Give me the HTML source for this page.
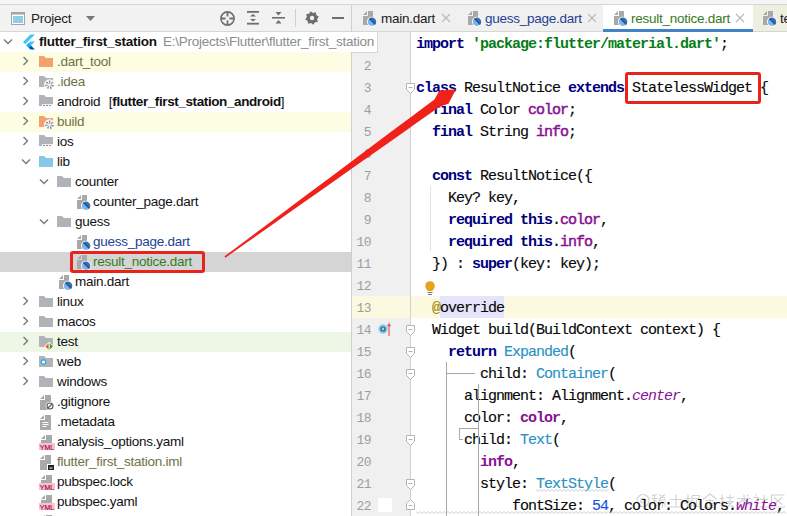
<!DOCTYPE html><html><head><meta charset="utf-8"><style>
html,body{margin:0;padding:0;}
body{width:787px;height:516px;position:relative;overflow:hidden;background:#fff;font-family:"Liberation Sans", sans-serif;}
.a{position:absolute;}
.t{position:absolute;white-space:pre;font-size:13.5px;letter-spacing:-0.25px;line-height:20px;height:20px;}
.c{position:absolute;white-space:pre;font-family:"Liberation Mono", monospace;font-size:15px;letter-spacing:-1px;line-height:22px;color:#080808;left:416px;-webkit-text-stroke:0.15px currentColor;}
.k{font-weight:bold;color:#000080;-webkit-text-stroke:0;}
.s{color:#067d17;font-weight:bold;-webkit-text-stroke:0;}
.p{color:#871094;-webkit-text-stroke:0.5px currentColor;}
.pb{color:#871094;font-weight:bold;-webkit-text-stroke:0;}
.pi{color:#871094;font-style:italic;-webkit-text-stroke:0;}
.cl{color:#2b91c7;}
.n{color:#1750eb;}
.ln{position:absolute;left:352px;width:19px;text-align:right;font-family:"Liberation Mono", monospace;font-size:13px;letter-spacing:-0.6px;line-height:22px;color:#9e9e9e;}

</style></head><body>
<div class="a" style="left:0;top:0;width:787px;height:4px;background:#f5f5f5"></div>
<div class="a" style="left:0;top:4px;width:787px;height:1px;background:#d6d6d6"></div>
<div class="a" style="left:0;top:5px;width:351px;height:26px;background:#f2f2f2"></div>
<div class="a" style="left:352px;top:5px;width:435px;height:26px;background:#f0f0f0"></div>
<div class="a" style="left:0;top:31px;width:787px;height:1px;background:#d6d6d6"></div>
<div class="a" style="left:351px;top:5px;width:1px;height:511px;background:#d0d0d0"></div>
<svg style="position:absolute;left:11px;top:12px" width="14" height="13" viewBox="0 0 14 13" ><rect x="0.5" y="0.5" width="13" height="12" fill="#fff" stroke="#a4a4a4"/><rect x="0" y="0" width="14" height="2.5" fill="#a4a4a4"/><rect x="2" y="4" width="10" height="7" fill="#8ccfe6"/></svg>
<div class="t" style="left:31px;top:9px;color:#222">Project</div>
<svg style="position:absolute;left:86px;top:16px" width="9" height="5" viewBox="0 0 9 5" ><path d="M0 0 H9 L4.5 5 Z" fill="#767676"/></svg>
<svg style="position:absolute;left:219px;top:10px" width="17" height="17" viewBox="0 0 17 17" ><circle cx="8.5" cy="8.5" r="6.6" fill="none" stroke="#6e6e6e" stroke-width="1.6"/><path d="M8.5 2 V6.6 M8.5 10.4 V15 M2 8.5 H6.6 M10.4 8.5 H15" stroke="#6e6e6e" stroke-width="1.8"/></svg>
<svg style="position:absolute;left:246px;top:10px" width="14" height="16" viewBox="0 0 14 16" ><rect x="1" y="1" width="12" height="1.8" fill="#6e6e6e"/><rect x="1" y="12.8" width="12" height="1.8" fill="#6e6e6e"/><path d="M4 6.6 L7 4 L10 6.6 Z M4 9 L7 11.6 L10 9 Z" fill="#6e6e6e"/></svg>
<svg style="position:absolute;left:272px;top:10px" width="14" height="16" viewBox="0 0 14 16" ><rect x="0" y="7" width="13" height="1.6" fill="#6e6e6e"/><path d="M3.5 2 L6.5 5.5 L9.5 2 Z M3.5 13.5 L6.5 10 L9.5 13.5 Z" fill="#6e6e6e"/></svg>
<div class="a" style="left:295px;top:9px;width:1px;height:18px;background:#d0d0d0"></div>
<svg style="position:absolute;left:304px;top:10px" width="16" height="16" viewBox="0 0 16 16" ><polygon points="14.87,6.63 13.10,9.01 13.82,11.89 10.89,12.32 9.37,14.87 6.99,13.10 4.11,13.82 3.68,10.89 1.13,9.37 2.90,6.99 2.18,4.11 5.11,3.68 6.63,1.13 9.01,2.90 11.89,2.18 12.32,5.11" fill="#6e6e6e"/><circle cx="8" cy="8" r="2.2" fill="#f2f2f2"/></svg>
<div class="a" style="left:332px;top:17px;width:12px;height:2px;background:#6e6e6e"></div>
<div class="a" style="left:603px;top:5px;width:150px;height:26px;background:#ffffff"></div>
<div class="a" style="left:603px;top:29px;width:150px;height:3px;background:#4083c9"></div>
<div class="a" style="left:753px;top:5px;width:34px;height:26px;background:#efefdf"></div>
<svg style="position:absolute;left:363px;top:11px" width="14" height="16" viewBox="0 0 14 16" ><path d="M0 4 L4 0 L4 4 Z" fill="#a9a9a9"/><rect x="5" y="0" width="5" height="14" fill="#a9a9a9"/><rect x="0" y="5" width="10" height="9" fill="#a9a9a9"/><circle cx="9" cy="10.8" r="5" fill="#fff"/><circle cx="9" cy="10.8" r="4.1" fill="#78b4ee"/><path d="M6.1 7.9 A4.1 4.1 0 0 1 11.9 13.7 Z" fill="#3b6eae"/><path d="M6.1 7.9 L11.9 13.7 L12.6 12.9 L6.9 7.2 Z" fill="#1d4a85"/></svg>
<div class="t" style="left:381px;top:9px;color:#1a1a1a">main.dart</div>
<svg style="position:absolute;left:441px;top:13px" width="10" height="10" viewBox="0 0 10 10" ><path d="M1 1 L9 9 M9 1 L1 9" stroke="#b8b8b8" stroke-width="1.1"/></svg>
<svg style="position:absolute;left:468px;top:11px" width="14" height="16" viewBox="0 0 14 16" ><path d="M0 4 L4 0 L4 4 Z" fill="#a9a9a9"/><rect x="5" y="0" width="5" height="14" fill="#a9a9a9"/><rect x="0" y="5" width="10" height="9" fill="#a9a9a9"/><circle cx="9" cy="10.8" r="5" fill="#fff"/><circle cx="9" cy="10.8" r="4.1" fill="#78b4ee"/><path d="M6.1 7.9 A4.1 4.1 0 0 1 11.9 13.7 Z" fill="#3b6eae"/><path d="M6.1 7.9 L11.9 13.7 L12.6 12.9 L6.9 7.2 Z" fill="#1d4a85"/></svg>
<div class="t" style="left:485px;top:9px;color:#243f94">guess_page.dart</div>
<svg style="position:absolute;left:587px;top:13px" width="10" height="10" viewBox="0 0 10 10" ><path d="M1 1 L9 9 M9 1 L1 9" stroke="#b8b8b8" stroke-width="1.1"/></svg>
<svg style="position:absolute;left:614px;top:11px" width="14" height="16" viewBox="0 0 14 16" ><path d="M0 4 L4 0 L4 4 Z" fill="#a9a9a9"/><rect x="5" y="0" width="5" height="14" fill="#a9a9a9"/><rect x="0" y="5" width="10" height="9" fill="#a9a9a9"/><circle cx="9" cy="10.8" r="5" fill="#fff"/><circle cx="9" cy="10.8" r="4.1" fill="#78b4ee"/><path d="M6.1 7.9 A4.1 4.1 0 0 1 11.9 13.7 Z" fill="#3b6eae"/><path d="M6.1 7.9 L11.9 13.7 L12.6 12.9 L6.9 7.2 Z" fill="#1d4a85"/></svg>
<div class="t" style="left:631px;top:9px;color:#367a22">result_notice.dart</div>
<svg style="position:absolute;left:735px;top:13px" width="10" height="10" viewBox="0 0 10 10" ><path d="M1 1 L9 9 M9 1 L1 9" stroke="#b8b8b8" stroke-width="1.1"/></svg>
<svg style="position:absolute;left:763px;top:11px" width="14" height="16" viewBox="0 0 14 16" ><path d="M0 4 L4 0 L4 4 Z" fill="#a9a9a9"/><rect x="5" y="0" width="5" height="14" fill="#a9a9a9"/><rect x="0" y="5" width="10" height="9" fill="#a9a9a9"/><circle cx="9" cy="10.8" r="5" fill="#fff"/><circle cx="9" cy="10.8" r="4.1" fill="#78b4ee"/><path d="M6.1 7.9 A4.1 4.1 0 0 1 11.9 13.7 Z" fill="#3b6eae"/><path d="M6.1 7.9 L11.9 13.7 L12.6 12.9 L6.9 7.2 Z" fill="#1d4a85"/></svg>
<div class="t" style="left:780px;top:9px;color:#1a1a1a">test</div>
<svg style="position:absolute;left:2.5px;top:38px" width="10" height="7" viewBox="0 0 10 7" ><path d="M1 1.5 L5 5.5 L9 1.5" fill="none" stroke="#7a7a7a" stroke-width="1.4"/></svg>
<svg style="position:absolute;left:22.5px;top:34px" width="12" height="16" viewBox="0 0 256 317"><path d="M157.7 0 L0 157.7 L48.8 206.5 L255.3 0 Z" fill="#47c5fb"/><path d="M156.6 145.4 L72.1 229.8 L121.1 279.5 L169.8 230.8 L255.3 145.4 Z" fill="#47c5fb"/><path d="M121.1 279.5 L158.2 316.6 H255.3 L169.8 230.8 Z" fill="#00569e"/><path d="M71.6 230.4 L120.4 181.6 L169.8 230.8 L121.1 279.5 Z" fill="#00b5f8"/></svg>
<div class="t" style="left:39px;top:32px;color:#111"><b>flutter_first_station</b></div>
<div class="a" style="left:0;top:52px;width:351px;height:20px;background:#fdfde4"></div>
<svg style="position:absolute;left:22px;top:56px" width="7" height="10" viewBox="0 0 7 10" ><path d="M1.5 1 L5.5 5 L1.5 9" fill="none" stroke="#7a7a7a" stroke-width="1.4"/></svg>
<svg style="position:absolute;left:39px;top:56px" width="14" height="11" viewBox="0 0 14 11" ><path d="M0 0 H5 L7 2 H14 V11 H0 Z" fill="#f4a26d"/></svg>
<div class="t" style="left:57px;top:52px;color:#707043">.dart_tool</div>
<svg style="position:absolute;left:22px;top:76px" width="7" height="10" viewBox="0 0 7 10" ><path d="M1.5 1 L5.5 5 L1.5 9" fill="none" stroke="#7a7a7a" stroke-width="1.4"/></svg>
<svg style="position:absolute;left:39px;top:76px" width="16" height="15" viewBox="0 0 16 15" ><path d="M0 0 H5 L7 2 H14 V11 H0 Z" fill="#b0b4b9"/><circle cx="10.5" cy="8.8" r="5.5" fill="#fff"/><path d="M11.10 8.80 L14.89 9.02 L14.36 10.91 Q12.55 10.05 11.10 8.80 Z" fill="#8a8f94"/><path d="M10.87 9.27 L13.07 12.37 L11.26 13.13 Q10.79 11.18 10.87 9.27 Z" fill="#8a8f94"/><path d="M10.37 9.38 L9.31 13.04 L7.58 12.10 Q8.82 10.52 10.37 9.38 Z" fill="#8a8f94"/><path d="M9.96 9.06 L6.45 10.51 L6.11 8.57 Q8.11 8.56 9.96 9.06 Z" fill="#8a8f94"/><path d="M9.96 8.54 L6.64 6.70 L7.94 5.22 Q9.20 6.78 9.96 8.54 Z" fill="#8a8f94"/><path d="M10.37 8.22 L9.74 4.47 L11.70 4.57 Q11.27 6.53 10.37 8.22 Z" fill="#8a8f94"/><path d="M10.87 8.33 L13.41 5.50 L14.56 7.10 Q12.76 7.98 10.87 8.33 Z" fill="#8a8f94"/></svg>
<div class="t" style="left:57px;top:72px;color:#707043">.idea</div>
<svg style="position:absolute;left:22px;top:96px" width="7" height="10" viewBox="0 0 7 10" ><path d="M1.5 1 L5.5 5 L1.5 9" fill="none" stroke="#7a7a7a" stroke-width="1.4"/></svg>
<svg style="position:absolute;left:39px;top:95px" width="14" height="11" viewBox="0 0 14 11" ><path d="M0 0 H5 L7 2 H14 V11 H0 Z" fill="#b0b4b9"/><rect x="3" y="9.2" width="11" height="3" fill="#fff"/><rect x="4" y="10" width="2" height="1.6" fill="#40a8d8"/><rect x="7" y="10" width="2" height="1.6" fill="#e06050"/><rect x="10" y="10" width="2" height="1.6" fill="#999"/></svg>
<div class="t" style="left:57px;top:92px;color:#111">android<span style="display:inline-block;width:8.5px"></span>[<b style="letter-spacing:-0.4px">flutter_first_station_android</b>]</div>
<div class="a" style="left:0;top:112px;width:351px;height:20px;background:#fdfde4"></div>
<svg style="position:absolute;left:22px;top:116px" width="7" height="10" viewBox="0 0 7 10" ><path d="M1.5 1 L5.5 5 L1.5 9" fill="none" stroke="#7a7a7a" stroke-width="1.4"/></svg>
<svg style="position:absolute;left:39px;top:116px" width="16" height="15" viewBox="0 0 16 15" ><path d="M0 0 H5 L7 2 H14 V11 H0 Z" fill="#f4a26d"/><circle cx="10.5" cy="8.8" r="5.5" fill="#fff"/><path d="M11.10 8.80 L14.89 9.02 L14.36 10.91 Q12.55 10.05 11.10 8.80 Z" fill="#8a8f94"/><path d="M10.87 9.27 L13.07 12.37 L11.26 13.13 Q10.79 11.18 10.87 9.27 Z" fill="#8a8f94"/><path d="M10.37 9.38 L9.31 13.04 L7.58 12.10 Q8.82 10.52 10.37 9.38 Z" fill="#8a8f94"/><path d="M9.96 9.06 L6.45 10.51 L6.11 8.57 Q8.11 8.56 9.96 9.06 Z" fill="#8a8f94"/><path d="M9.96 8.54 L6.64 6.70 L7.94 5.22 Q9.20 6.78 9.96 8.54 Z" fill="#8a8f94"/><path d="M10.37 8.22 L9.74 4.47 L11.70 4.57 Q11.27 6.53 10.37 8.22 Z" fill="#8a8f94"/><path d="M10.87 8.33 L13.41 5.50 L14.56 7.10 Q12.76 7.98 10.87 8.33 Z" fill="#8a8f94"/></svg>
<div class="t" style="left:57px;top:112px;color:#707043">build</div>
<svg style="position:absolute;left:22px;top:136px" width="7" height="10" viewBox="0 0 7 10" ><path d="M1.5 1 L5.5 5 L1.5 9" fill="none" stroke="#7a7a7a" stroke-width="1.4"/></svg>
<svg style="position:absolute;left:39px;top:135px" width="14" height="11" viewBox="0 0 14 11" ><path d="M0 0 H5 L7 2 H14 V11 H0 Z" fill="#b0b4b9"/><rect x="3" y="9.2" width="11" height="3" fill="#fff"/><rect x="4" y="10" width="2" height="1.6" fill="#40a8d8"/><rect x="7" y="10" width="2" height="1.6" fill="#e06050"/><rect x="10" y="10" width="2" height="1.6" fill="#999"/></svg>
<div class="t" style="left:57px;top:132px;color:#111">ios</div>
<svg style="position:absolute;left:20.5px;top:158px" width="10" height="7" viewBox="0 0 10 7" ><path d="M1 1.5 L5 5.5 L9 1.5" fill="none" stroke="#7a7a7a" stroke-width="1.4"/></svg>
<svg style="position:absolute;left:39px;top:156px" width="14" height="11" viewBox="0 0 14 11" ><path d="M0 0 H5 L7 2 H14 V11 H0 Z" fill="#87c8ea"/></svg>
<div class="t" style="left:57px;top:152px;color:#111">lib</div>
<svg style="position:absolute;left:38.5px;top:178px" width="10" height="7" viewBox="0 0 10 7" ><path d="M1 1.5 L5 5.5 L9 1.5" fill="none" stroke="#7a7a7a" stroke-width="1.4"/></svg>
<svg style="position:absolute;left:57px;top:176px" width="14" height="11" viewBox="0 0 14 11" ><path d="M0 0 H5 L7 2 H14 V11 H0 Z" fill="#b0b4b9"/></svg>
<div class="t" style="left:75px;top:172px;color:#111">counter</div>
<svg style="position:absolute;left:77px;top:195px" width="14" height="16" viewBox="0 0 14 16" ><path d="M0 4 L4 0 L4 4 Z" fill="#a9a9a9"/><rect x="5" y="0" width="5" height="14" fill="#a9a9a9"/><rect x="0" y="5" width="10" height="9" fill="#a9a9a9"/><circle cx="9" cy="10.8" r="5" fill="#fff"/><circle cx="9" cy="10.8" r="4.1" fill="#78b4ee"/><path d="M6.1 7.9 A4.1 4.1 0 0 1 11.9 13.7 Z" fill="#3b6eae"/><path d="M6.1 7.9 L11.9 13.7 L12.6 12.9 L6.9 7.2 Z" fill="#1d4a85"/></svg>
<div class="t" style="left:93px;top:192px;color:#111">counter_page.dart</div>
<svg style="position:absolute;left:38.5px;top:218px" width="10" height="7" viewBox="0 0 10 7" ><path d="M1 1.5 L5 5.5 L9 1.5" fill="none" stroke="#7a7a7a" stroke-width="1.4"/></svg>
<svg style="position:absolute;left:57px;top:216px" width="14" height="11" viewBox="0 0 14 11" ><path d="M0 0 H5 L7 2 H14 V11 H0 Z" fill="#b0b4b9"/></svg>
<div class="t" style="left:75px;top:212px;color:#111">guess</div>
<svg style="position:absolute;left:77px;top:235px" width="14" height="16" viewBox="0 0 14 16" ><path d="M0 4 L4 0 L4 4 Z" fill="#a9a9a9"/><rect x="5" y="0" width="5" height="14" fill="#a9a9a9"/><rect x="0" y="5" width="10" height="9" fill="#a9a9a9"/><circle cx="9" cy="10.8" r="5" fill="#fff"/><circle cx="9" cy="10.8" r="4.1" fill="#78b4ee"/><path d="M6.1 7.9 A4.1 4.1 0 0 1 11.9 13.7 Z" fill="#3b6eae"/><path d="M6.1 7.9 L11.9 13.7 L12.6 12.9 L6.9 7.2 Z" fill="#1d4a85"/></svg>
<div class="t" style="left:93px;top:232px;color:#243f94">guess_page.dart</div>
<div class="a" style="left:0;top:252px;width:351px;height:20px;background:#d5d5d5"></div>
<svg style="position:absolute;left:77px;top:255px" width="14" height="16" viewBox="0 0 14 16" ><path d="M0 4 L4 0 L4 4 Z" fill="#a9a9a9"/><rect x="5" y="0" width="5" height="14" fill="#a9a9a9"/><rect x="0" y="5" width="10" height="9" fill="#a9a9a9"/><circle cx="9" cy="10.8" r="5" fill="#fff"/><circle cx="9" cy="10.8" r="4.1" fill="#78b4ee"/><path d="M6.1 7.9 A4.1 4.1 0 0 1 11.9 13.7 Z" fill="#3b6eae"/><path d="M6.1 7.9 L11.9 13.7 L12.6 12.9 L6.9 7.2 Z" fill="#1d4a85"/></svg>
<div class="t" style="left:93px;top:252px;color:#367a22">result_notice.dart</div>
<svg style="position:absolute;left:59px;top:275px" width="14" height="16" viewBox="0 0 14 16" ><path d="M0 4 L4 0 L4 4 Z" fill="#a9a9a9"/><rect x="5" y="0" width="5" height="14" fill="#a9a9a9"/><rect x="0" y="5" width="10" height="9" fill="#a9a9a9"/><circle cx="9" cy="10.8" r="5" fill="#fff"/><circle cx="9" cy="10.8" r="4.1" fill="#78b4ee"/><path d="M6.1 7.9 A4.1 4.1 0 0 1 11.9 13.7 Z" fill="#3b6eae"/><path d="M6.1 7.9 L11.9 13.7 L12.6 12.9 L6.9 7.2 Z" fill="#1d4a85"/></svg>
<div class="t" style="left:75px;top:272px;color:#111">main.dart</div>
<svg style="position:absolute;left:22px;top:296px" width="7" height="10" viewBox="0 0 7 10" ><path d="M1.5 1 L5.5 5 L1.5 9" fill="none" stroke="#7a7a7a" stroke-width="1.4"/></svg>
<svg style="position:absolute;left:39px;top:296px" width="14" height="11" viewBox="0 0 14 11" ><path d="M0 0 H5 L7 2 H14 V11 H0 Z" fill="#b0b4b9"/></svg>
<div class="t" style="left:57px;top:292px;color:#111">linux</div>
<svg style="position:absolute;left:22px;top:316px" width="7" height="10" viewBox="0 0 7 10" ><path d="M1.5 1 L5.5 5 L1.5 9" fill="none" stroke="#7a7a7a" stroke-width="1.4"/></svg>
<svg style="position:absolute;left:39px;top:316px" width="14" height="11" viewBox="0 0 14 11" ><path d="M0 0 H5 L7 2 H14 V11 H0 Z" fill="#b0b4b9"/></svg>
<div class="t" style="left:57px;top:312px;color:#111">macos</div>
<div class="a" style="left:0;top:332px;width:351px;height:20px;background:#eef6e6"></div>
<svg style="position:absolute;left:22px;top:336px" width="7" height="10" viewBox="0 0 7 10" ><path d="M1.5 1 L5.5 5 L1.5 9" fill="none" stroke="#7a7a7a" stroke-width="1.4"/></svg>
<svg style="position:absolute;left:39px;top:336px" width="15" height="14" viewBox="0 0 15 14" ><path d="M0 0 H5 L7 2 H14 V11 H0 Z" fill="#b0b4b9"/><path d="M5 10.5 L10 6 L15 10.5 L10 15 Z" fill="#fff"/><path d="M6.2 10.5 L9.6 7.3 V13.7 Z" fill="#e0652e"/><path d="M14 10.5 L10.6 7.3 V13.7 Z" fill="#3fa33a"/></svg>
<div class="t" style="left:57px;top:332px;color:#111">test</div>
<svg style="position:absolute;left:22px;top:356px" width="7" height="10" viewBox="0 0 7 10" ><path d="M1.5 1 L5.5 5 L1.5 9" fill="none" stroke="#7a7a7a" stroke-width="1.4"/></svg>
<svg style="position:absolute;left:39px;top:356px" width="14" height="11" viewBox="0 0 14 11" ><path d="M0 0 H5 L7 2 H14 V11 H0 Z" fill="#b0b4b9"/><circle cx="4.5" cy="6" r="2.2" fill="#fff" stroke="#3aaee8" stroke-width="1.4"/></svg>
<div class="t" style="left:57px;top:352px;color:#111">web</div>
<svg style="position:absolute;left:22px;top:376px" width="7" height="10" viewBox="0 0 7 10" ><path d="M1.5 1 L5.5 5 L1.5 9" fill="none" stroke="#7a7a7a" stroke-width="1.4"/></svg>
<svg style="position:absolute;left:39px;top:376px" width="14" height="11" viewBox="0 0 14 11" ><path d="M0 0 H5 L7 2 H14 V11 H0 Z" fill="#b0b4b9"/></svg>
<div class="t" style="left:57px;top:372px;color:#111">windows</div>
<svg style="position:absolute;left:40px;top:395px" width="15" height="15" viewBox="0 0 15 15" ><path d="M0 4 L4 0 L4 4 Z" fill="#a9a9a9"/><rect x="5" y="0" width="6" height="15" fill="#a9a9a9"/><rect x="0" y="5" width="11" height="10" fill="#a9a9a9"/><circle cx="10" cy="11" r="4.3" fill="#fff"/><circle cx="10" cy="11" r="3" fill="none" stroke="#555" stroke-width="1.1"/><path d="M8 13 L12 9" stroke="#555" stroke-width="1.1"/></svg>
<div class="t" style="left:57px;top:392px;color:#111">.gitignore</div>
<svg style="position:absolute;left:40px;top:415px" width="15" height="15" viewBox="0 0 15 15" ><path d="M0 4 L4 0 L4 4 Z" fill="#a9a9a9"/><rect x="5" y="0" width="6" height="15" fill="#a9a9a9"/><rect x="0" y="5" width="11" height="10" fill="#a9a9a9"/><rect x="2.5" y="7" width="6" height="1" fill="#fff"/><rect x="2.5" y="9" width="6" height="1" fill="#fff"/><rect x="2.5" y="11" width="4" height="1" fill="#fff"/></svg>
<div class="t" style="left:57px;top:412px;color:#111">.metadata</div>
<svg style="position:absolute;left:41px;top:435px" width="15" height="15" viewBox="0 0 15 15" ><path d="M0 4 L4 0 L4 4 Z" fill="#a9a9a9"/><rect x="5" y="0" width="6" height="15" fill="#a9a9a9"/><rect x="0" y="5" width="11" height="10" fill="#a9a9a9"/><rect x="-1" y="8" width="17" height="7" fill="#fff"/></svg>
<svg style="position:absolute;left:39px;top:443px" width="16" height="7" viewBox="0 0 16 7" ><rect x="0" y="0" width="16" height="7" fill="#f3c4d2"/><text x="8" y="6.6" font-family="Liberation Sans" font-size="7.6" fill="#b8204a" text-anchor="middle" textLength="14.5" lengthAdjust="spacingAndGlyphs" stroke="#b8204a" stroke-width="0.25">YML</text></svg>
<div class="t" style="left:57px;top:432px;color:#111">analysis_options.yaml</div>
<svg style="position:absolute;left:40px;top:455px" width="15" height="15" viewBox="0 0 15 15" ><path d="M0 4 L4 0 L4 4 Z" fill="#a9a9a9"/><rect x="5" y="0" width="6" height="15" fill="#a9a9a9"/><rect x="0" y="5" width="11" height="10" fill="#a9a9a9"/><rect x="7" y="9" width="8" height="6" fill="#fff"/><rect x="8" y="10" width="6" height="5" fill="#222"/><rect x="9.5" y="12.5" width="3" height="1" fill="#fff"/></svg>
<div class="t" style="left:57px;top:452px;color:#707043">flutter_first_station.iml</div>
<svg style="position:absolute;left:41px;top:475px" width="15" height="15" viewBox="0 0 15 15" ><path d="M0 4 L4 0 L4 4 Z" fill="#a9a9a9"/><rect x="5" y="0" width="6" height="15" fill="#a9a9a9"/><rect x="0" y="5" width="11" height="10" fill="#a9a9a9"/><rect x="-1" y="8" width="17" height="7" fill="#fff"/></svg>
<svg style="position:absolute;left:39px;top:483px" width="16" height="7" viewBox="0 0 16 7" ><rect x="0" y="0" width="16" height="7" fill="#f3c4d2"/><text x="8" y="6.6" font-family="Liberation Sans" font-size="7.6" fill="#b8204a" text-anchor="middle" textLength="14.5" lengthAdjust="spacingAndGlyphs" stroke="#b8204a" stroke-width="0.25">YML</text></svg>
<div class="t" style="left:57px;top:472px;color:#111">pubspec.lock</div>
<svg style="position:absolute;left:41px;top:495px" width="15" height="15" viewBox="0 0 15 15" ><path d="M0 4 L4 0 L4 4 Z" fill="#a9a9a9"/><rect x="5" y="0" width="6" height="15" fill="#a9a9a9"/><rect x="0" y="5" width="11" height="10" fill="#a9a9a9"/><rect x="-1" y="8" width="17" height="7" fill="#fff"/></svg>
<svg style="position:absolute;left:39px;top:503px" width="16" height="7" viewBox="0 0 16 7" ><rect x="0" y="0" width="16" height="7" fill="#f3c4d2"/><text x="8" y="6.6" font-family="Liberation Sans" font-size="7.6" fill="#b8204a" text-anchor="middle" textLength="14.5" lengthAdjust="spacingAndGlyphs" stroke="#b8204a" stroke-width="0.25">YML</text></svg>
<div class="t" style="left:57px;top:492px;color:#111">pubspec.yaml</div>
<svg style="position:absolute;left:41px;top:515px" width="15" height="15" viewBox="0 0 15 15" ><path d="M0 4 L4 0 L4 4 Z" fill="#a9a9a9"/><rect x="5" y="0" width="6" height="15" fill="#a9a9a9"/><rect x="0" y="5" width="11" height="10" fill="#a9a9a9"/><rect x="-1" y="8" width="17" height="7" fill="#fff"/></svg>
<svg style="position:absolute;left:39px;top:523px" width="16" height="7" viewBox="0 0 16 7" ><rect x="0" y="0" width="16" height="7" fill="#f3c4d2"/><text x="8" y="6.6" font-family="Liberation Sans" font-size="7.6" fill="#b8204a" text-anchor="middle" textLength="14.5" lengthAdjust="spacingAndGlyphs" stroke="#b8204a" stroke-width="0.25">YML</text></svg>
<div class="a" style="left:352px;top:32px;width:25px;height:20px;background:#fff;border-right:1px solid #d8d8d8;border-bottom:1px solid #d8d8d8"></div>
<div class="a" style="left:352px;top:52px;width:58px;height:464px;background:#f0f0f0"></div>
<div class="a" style="left:377px;top:32px;width:33px;height:20px;background:#f0f0f0"></div>
<div class="a" style="left:352px;top:296px;width:435px;height:22px;background:#fdf9e0"></div>
<div class="a" style="left:410px;top:32px;width:1px;height:484px;background:#d0d0d0"></div>
<div class="a" style="left:440px;top:296px;width:64px;height:22px;background:#e6e4fa"></div>
<svg class="a" style="left:0;top:0" width="787" height="516"><circle cx="643" cy="500.5" r="6" fill="none" stroke="#d2d2d2" stroke-width="1.1"/><circle cx="643" cy="500.5" r="2.3" fill="none" stroke="#d2d2d2" stroke-width="1.1"/><path transform="translate(651,493.5)" d="M1 2 L6 1 M0.5 5 H6.5 M3.5 1.5 V14 M3.5 6 L0.5 11 M3.5 6 L6 9 M8 1 L14 5 M14 1 L8 5 M7 6.5 H15 M10 5 L8 9 M9 9 H14 V13 M9 9 V12 M11.5 8 V14" fill="none" stroke="#d2d2d2" stroke-width="1.1"/><path transform="translate(668,493.5)" d="M2 6 H14 M8 1 V13 M0.5 13.5 H15.5" fill="none" stroke="#d2d2d2" stroke-width="1.1"/><path transform="translate(685,493.5)" d="M0.5 5 H5.5 M3 1 V13 L1.5 12 M0.5 10 L5.5 7.5 M7 2 H14 V5 H7 M7 2 V8 L6 14 M8.5 8 V13 H14.5 V8 M11.5 6 V13" fill="none" stroke="#d2d2d2" stroke-width="1.1"/><path transform="translate(702,493.5)" d="M8 0.5 L1 6 M8 0.5 L15 6 M4 7 H12 M3 10 H13 M8 5 V13 M1.5 14 H14.5 M5 11 L6 13 M11 11 L10 13" fill="none" stroke="#d2d2d2" stroke-width="1.1"/><path transform="translate(719,493.5)" d="M0.5 5 H5.5 M3 1 V13 L1.5 12 M0.5 10 L5.5 7.5 M7 4 H15 M11 1 V7 M7.5 8 H14 L8 14 M9 9 L15 14" fill="none" stroke="#d2d2d2" stroke-width="1.1"/><path transform="translate(736,493.5)" d="M1 5 H15 M8 1 V14 M8 5 L1 12 M8 5 L15 12 M11 1.5 L12.5 3" fill="none" stroke="#d2d2d2" stroke-width="1.1"/><path transform="translate(753,493.5)" d="M2.5 0.5 L3.5 2 M0.5 4 H5.5 L1 10 M3 7 V14 M3.5 8 L5.5 10 M7 6 H15 M11 1.5 V13.5 M6.5 13.5 H15.5" fill="none" stroke="#d2d2d2" stroke-width="1.1"/><path transform="translate(770,493.5)" d="M14.5 1.5 H1.5 V13.5 H15 M4 4 L12 11 M12 4 L4 11" fill="none" stroke="#d2d2d2" stroke-width="1.1"/></svg>
<div class="c" style="top:34px"><span class="k">import</span> <span class="s">'package:flutter/material.dart'</span>;</div>
<div class="ln" style="top:56px">2</div>
<div class="ln" style="top:78px">3</div>
<div class="c" style="top:78px"><span class="k">class</span> ResultNotice <span class="k">extends</span> StatelessWidget {</div>
<div class="ln" style="top:100px">4</div>
<div class="c" style="top:100px">  <span class="k">final</span> Color <span class="p">color</span>;</div>
<div class="ln" style="top:122px">5</div>
<div class="c" style="top:122px">  <span class="k">final</span> String <span class="p">info</span>;</div>
<div class="ln" style="top:144px">6</div>
<div class="ln" style="top:166px">7</div>
<div class="c" style="top:166px">  <span class="k">const</span> ResultNotice({</div>
<div class="ln" style="top:188px">8</div>
<div class="c" style="top:188px">    Key? key,</div>
<div class="ln" style="top:210px">9</div>
<div class="c" style="top:210px">    <span class="k">required</span> <span class="k">this</span>.<span class="p">color</span>,</div>
<div class="ln" style="top:232px">10</div>
<div class="c" style="top:232px">    <span class="k">required</span> <span class="k">this</span>.<span class="p">info</span>,</div>
<div class="ln" style="top:254px">11</div>
<div class="c" style="top:254px">  }) : <span class="k">super</span>(key: key);</div>
<div class="ln" style="top:276px">12</div>
<div class="ln" style="top:298px">13</div>
<div class="c" style="top:298px">  <span style="color:#9e880d">@</span>override</div>
<div class="ln" style="top:320px">14</div>
<div class="c" style="top:320px">  Widget build(BuildContext context) {</div>
<div class="ln" style="top:342px">15</div>
<div class="c" style="top:342px">    <span class="k">return</span> <span class="cl">Expanded</span>(</div>
<div class="ln" style="top:364px">16</div>
<div class="c" style="top:364px">        child: <span class="cl">Container</span>(</div>
<div class="ln" style="top:386px">17</div>
<div class="c" style="top:386px">      alignment: Alignment.<span class="pi">center</span>,</div>
<div class="ln" style="top:408px">18</div>
<div class="c" style="top:408px">      color: <span class="pb">color</span>,</div>
<div class="ln" style="top:430px">19</div>
<div class="c" style="top:430px">      child: <span class="cl">Text</span>(</div>
<div class="ln" style="top:452px">20</div>
<div class="c" style="top:452px">        <span class="pb">info</span>,</div>
<div class="ln" style="top:474px">21</div>
<div class="c" style="top:474px">        style: <span class="cl">TextStyle</span>(</div>
<div class="ln" style="top:496px">22</div>
<div class="c" style="top:496px">            fontSize: <span class="n">54</span>, color: Colors.<span class="pi">white</span>,</div>
<svg style="position:absolute;left:406px;top:83px" width="9" height="11" viewBox="0 0 9 11" ><path d="M0.5 0.5 H8.5 V6.5 L4.5 10.5 L0.5 6.5 Z" fill="#fff" stroke="#b4b4b4"/><path d="M2.5 4.5 H6.5" stroke="#b4b4b4"/></svg>
<svg style="position:absolute;left:406px;top:325px" width="9" height="11" viewBox="0 0 9 11" ><path d="M0.5 0.5 H8.5 V6.5 L4.5 10.5 L0.5 6.5 Z" fill="#fff" stroke="#b4b4b4"/><path d="M2.5 4.5 H6.5" stroke="#b4b4b4"/></svg>
<svg style="position:absolute;left:406px;top:347px" width="9" height="11" viewBox="0 0 9 11" ><path d="M0.5 0.5 H8.5 V6.5 L4.5 10.5 L0.5 6.5 Z" fill="#fff" stroke="#b4b4b4"/><path d="M2.5 4.5 H6.5" stroke="#b4b4b4"/></svg>
<svg style="position:absolute;left:406px;top:369px" width="9" height="11" viewBox="0 0 9 11" ><path d="M0.5 0.5 H8.5 V6.5 L4.5 10.5 L0.5 6.5 Z" fill="#fff" stroke="#b4b4b4"/><path d="M2.5 4.5 H6.5" stroke="#b4b4b4"/></svg>
<svg style="position:absolute;left:406px;top:435px" width="9" height="11" viewBox="0 0 9 11" ><path d="M0.5 0.5 H8.5 V6.5 L4.5 10.5 L0.5 6.5 Z" fill="#fff" stroke="#b4b4b4"/><path d="M2.5 4.5 H6.5" stroke="#b4b4b4"/></svg>
<svg style="position:absolute;left:406px;top:479px" width="9" height="11" viewBox="0 0 9 11" ><path d="M0.5 0.5 H8.5 V6.5 L4.5 10.5 L0.5 6.5 Z" fill="#fff" stroke="#b4b4b4"/><path d="M2.5 4.5 H6.5" stroke="#b4b4b4"/></svg>
<svg style="position:absolute;left:406px;top:499px" width="9" height="11" viewBox="0 0 9 11" ><path d="M0.5 10.5 H8.5 V4.5 L4.5 0.5 L0.5 4.5 Z" fill="#fff" stroke="#b4b4b4"/><path d="M2.5 6.5 H6.5" stroke="#b4b4b4"/></svg>
<svg style="position:absolute;left:424px;top:281px" width="12" height="15" viewBox="0 0 12 15" ><circle cx="6" cy="5" r="4.8" fill="#e8a21a"/><rect x="3.5" y="7.5" width="5" height="2.5" fill="#e8a21a"/><rect x="3.5" y="11" width="5" height="1" fill="#777"/><rect x="4" y="13" width="4" height="1" fill="#777"/></svg>
<svg style="position:absolute;left:377px;top:322px" width="16" height="14" viewBox="0 0 16 14" ><circle cx="6" cy="7" r="4.5" fill="#7cc8e4"/><circle cx="6" cy="7" r="2" fill="#9fd6ea" stroke="#2a5f86" stroke-width="1.2"/><path d="M12 14 V3" stroke="#e35a5e" stroke-width="1.2"/><path d="M9.9 4.2 L12 0.6 L14.1 4.2 Z" fill="#e35a5e"/></svg>
<div class="a" style="left:378px;top:498px;width:14px;height:14px;background:#fff"></div>
<div class="a" style="left:430px;top:186px;width:1px;height:65px;background:#e3e3e3"></div>
<svg style="position:absolute;left:536px;top:489px" width="74" height="3"><polyline points="0.0,0.5 2.0,2.5 4.0,0.5 6.0,2.5 8.0,0.5 10.0,2.5 12.0,0.5 14.0,2.5 16.0,0.5 18.0,2.5 20.0,0.5 22.0,2.5 24.0,0.5 26.0,2.5 28.0,0.5 30.0,2.5 32.0,0.5 34.0,2.5 36.0,0.5 38.0,2.5 40.0,0.5 42.0,2.5 44.0,0.5 46.0,2.5 48.0,0.5 50.0,2.5 52.0,0.5 54.0,2.5 56.0,0.5 58.0,2.5 60.0,0.5 62.0,2.5 64.0,0.5 66.0,2.5 68.0,0.5 70.0,2.5 72.0,0.5" fill="none" stroke="#c8c8c8" stroke-width="0.9"/></svg>
<svg style="position:absolute;left:416px;top:511px" width="373" height="3"><polyline points="0.0,0.5 2.0,2.5 4.0,0.5 6.0,2.5 8.0,0.5 10.0,2.5 12.0,0.5 14.0,2.5 16.0,0.5 18.0,2.5 20.0,0.5 22.0,2.5 24.0,0.5 26.0,2.5 28.0,0.5 30.0,2.5 32.0,0.5 34.0,2.5 36.0,0.5 38.0,2.5 40.0,0.5 42.0,2.5 44.0,0.5 46.0,2.5 48.0,0.5 50.0,2.5 52.0,0.5 54.0,2.5 56.0,0.5 58.0,2.5 60.0,0.5 62.0,2.5 64.0,0.5 66.0,2.5 68.0,0.5 70.0,2.5 72.0,0.5 74.0,2.5 76.0,0.5 78.0,2.5 80.0,0.5 82.0,2.5 84.0,0.5 86.0,2.5 88.0,0.5 90.0,2.5 92.0,0.5 94.0,2.5 96.0,0.5 98.0,2.5 100.0,0.5 102.0,2.5 104.0,0.5 106.0,2.5 108.0,0.5 110.0,2.5 112.0,0.5 114.0,2.5 116.0,0.5 118.0,2.5 120.0,0.5 122.0,2.5 124.0,0.5 126.0,2.5 128.0,0.5 130.0,2.5 132.0,0.5 134.0,2.5 136.0,0.5 138.0,2.5 140.0,0.5 142.0,2.5 144.0,0.5 146.0,2.5 148.0,0.5 150.0,2.5 152.0,0.5 154.0,2.5 156.0,0.5 158.0,2.5 160.0,0.5 162.0,2.5 164.0,0.5 166.0,2.5 168.0,0.5 170.0,2.5 172.0,0.5 174.0,2.5 176.0,0.5 178.0,2.5 180.0,0.5 182.0,2.5 184.0,0.5 186.0,2.5 188.0,0.5 190.0,2.5 192.0,0.5 194.0,2.5 196.0,0.5 198.0,2.5 200.0,0.5 202.0,2.5 204.0,0.5 206.0,2.5 208.0,0.5 210.0,2.5 212.0,0.5 214.0,2.5 216.0,0.5 218.0,2.5 220.0,0.5 222.0,2.5 224.0,0.5 226.0,2.5 228.0,0.5 230.0,2.5 232.0,0.5 234.0,2.5 236.0,0.5 238.0,2.5 240.0,0.5 242.0,2.5 244.0,0.5 246.0,2.5 248.0,0.5 250.0,2.5 252.0,0.5 254.0,2.5 256.0,0.5 258.0,2.5 260.0,0.5 262.0,2.5 264.0,0.5 266.0,2.5 268.0,0.5 270.0,2.5 272.0,0.5 274.0,2.5 276.0,0.5 278.0,2.5 280.0,0.5 282.0,2.5 284.0,0.5 286.0,2.5 288.0,0.5 290.0,2.5 292.0,0.5 294.0,2.5 296.0,0.5 298.0,2.5 300.0,0.5 302.0,2.5 304.0,0.5 306.0,2.5 308.0,0.5 310.0,2.5 312.0,0.5 314.0,2.5 316.0,0.5 318.0,2.5 320.0,0.5 322.0,2.5 324.0,0.5 326.0,2.5 328.0,0.5 330.0,2.5 332.0,0.5 334.0,2.5 336.0,0.5 338.0,2.5 340.0,0.5 342.0,2.5 344.0,0.5 346.0,2.5 348.0,0.5 350.0,2.5 352.0,0.5 354.0,2.5 356.0,0.5 358.0,2.5 360.0,0.5 362.0,2.5 364.0,0.5 366.0,2.5 368.0,0.5 370.0,2.5" fill="none" stroke="#c8c8c8" stroke-width="0.9"/></svg>
<div class="a" style="left:446px;top:362px;width:1px;height:154px;background:#a8a8a8"></div>
<div class="a" style="left:446px;top:373px;width:29px;height:1px;background:#a8a8a8"></div>
<div class="a" style="left:478px;top:384px;width:1px;height:132px;background:#a8a8a8"></div>
<div class="a" style="left:459px;top:428px;width:20px;height:1px;background:#a8a8a8"></div>
<div class="a" style="left:459px;top:428px;width:1px;height:11px;background:#a8a8a8"></div>
<div class="a" style="left:459px;top:439px;width:4px;height:1px;background:#a8a8a8"></div>
<div class="a" style="left:159px;top:32px;width:218px;height:20px;background:#fff;"></div>
<div class="a" style="left:352px;top:52px;width:26px;height:1px;background:#d6d6d6"></div>
<div class="a" style="left:377px;top:32px;width:1px;height:20px;background:#d6d6d6"></div>
<div class="t" style="left:163px;top:32px;color:#8c8c8c">E:\Projects\Flutter\flutter_first_station</div>
<div class="a" style="left:70px;top:251px;width:129px;height:16px;border:3px solid #e8231c;border-radius:3px"></div>
<div class="a" style="left:625px;top:72px;width:130px;height:26px;border:3px solid #e8231c;border-radius:3px"></div>
<svg class="a" style="left:0;top:0" width="787" height="516"><polygon points="224.53,256.35 245.51,240.66 266.50,224.97 287.48,209.28 308.47,193.59 329.45,177.90 350.44,162.20 371.42,146.51 392.41,130.82 413.39,115.13 434.38,99.44 439.30,90.80 456.00,89.30 448.60,103.60 439.66,106.72 418.24,121.81 396.82,136.91 375.41,152.00 353.99,167.09 332.57,182.18 311.15,197.28 289.73,212.37 268.31,227.46 246.89,242.55 225.47,257.65" fill="#f0211b"/></svg>
</body></html>
